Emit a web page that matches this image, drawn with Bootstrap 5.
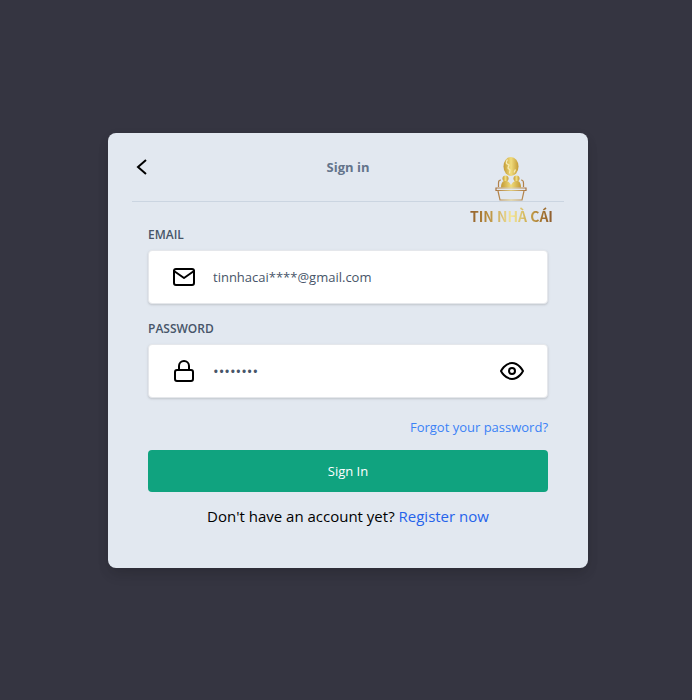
<!DOCTYPE html>
<html lang="en">
<head>
<meta charset="utf-8">
<meta name="viewport" content="width=device-width, initial-scale=1">
<title>Sign in</title>
<link href="https://cdn.jsdelivr.net/npm/bootstrap@5.3.0/dist/css/bootstrap.min.css" rel="stylesheet">
<style>
body { background: #353541; font-family: "Open Sans", "Noto Sans", sans-serif; color: #000; }
.signin-card { max-width: 480px; background: #e2e8f0; border-radius: 8px; box-shadow: 0 8px 15px -3px rgba(0,0,0,.1), 0 4px 12px rgba(0,0,0,.08); padding: 0 24px 40px; }
.signin-head { height: 69px; border-bottom: 1px solid #cbd5e1; }
.signin-title { font-size: 13px; font-weight: 700; color: #64748b; line-height: 20px; }
.back-btn { width: 20px; height: 24px; }
.brand { top: 23px; right: 35px; }
.brand-name { font: bold 14px/24px "Noto Sans CJK SC", sans-serif; white-space: nowrap; color: transparent; background: linear-gradient(90deg, #93602c, #b88d3d 22%, #f3e79c 50%, #d0b257 68%, #a8772f 85%, #8c5c30); -webkit-background-clip: text; background-clip: text; }
.signin-form { padding: 25px 16px 0; }
.field-label { font-size: 12px; font-weight: 600; color: #475569; line-height: 16px; margin-bottom: 7px; }
.field-box { height: 54px; background: #fff; border: 1px solid #e5e7eb; border-radius: 4px; box-shadow: 0 1px 3px rgba(0,0,0,.1), 0 1px 2px rgba(0,0,0,.06); padding: 0 23px; }
.field-box.first { margin-bottom: 17px; }
.field-input, .field-input:focus { background: transparent; color: #475569; font-size: 13px; line-height: 20px; border: 0; box-shadow: none; padding: 0 0 0 17px; }
.field-input[type="password"] { font-size: 15px; }
.line-icon { fill: none; stroke: #000; stroke-width: 2; stroke-linecap: round; stroke-linejoin: round; display: block; flex: none; }
.forgot-row { font-size: 13px; line-height: 20px; margin: 19px 0 13px; }
.forgot-row a { color: #3b82f6; }
.signin-btn, .signin-btn:hover { background: #10a37f; color: #fff; font-size: 13px; line-height: 20px; border: 0; border-radius: 4px; padding: 11px; }
.register { font-size: 15px; line-height: 24px; }
.register a { color: #2563eb; }
</style>
</head>
<body>
<main class="min-vh-100 d-flex align-items-center justify-content-center ps-1">
  <section class="signin-card position-relative w-100">
    <header class="signin-head d-flex align-items-center justify-content-between">
      <button type="button" class="back-btn btn p-0 border-0" aria-label="Back">
        <svg class="line-icon" width="20" height="24" viewBox="0 0 20 24"><path d="M14 5 6 12l8 7" style="stroke-linejoin:miter;stroke-linecap:butt"/></svg>
      </button>
      <h1 class="signin-title m-0">Sign in</h1>
      <span class="back-btn"></span>
    </header>
    <div class="brand position-absolute d-flex flex-column align-items-center">
      <svg width="32" height="48" viewBox="0 0 32 48" aria-hidden="true">
        <defs>
          <linearGradient id="gold" x1="0" x2="1"><stop offset="0" stop-color="#c39a35"/><stop offset=".5" stop-color="#f0dc7c"/><stop offset="1" stop-color="#c39a35"/></linearGradient>
          <linearGradient id="bronze" gradientUnits="userSpaceOnUse" x1="0" x2="32" y1="0" y2="0"><stop offset="0" stop-color="#a56d3c"/><stop offset=".5" stop-color="#dfca7b"/><stop offset="1" stop-color="#a56d3c"/></linearGradient>
        </defs>
        <ellipse cx="16" cy="10.500" rx="7.500" ry="9.500" fill="url(#gold)"/>
        <path d="M12.500 3.500q-1.500 2-1 4l2.500 1.500-1 3 2 2-.5 3.500M20.500 13.500l-1.500 3" fill="none" stroke="#f6ebb4" stroke-width="1.300"/>
        <circle cx="10.500" cy="22.500" r="3" fill="url(#gold)"/>
        <circle cx="21.500" cy="22.500" r="3" fill="url(#gold)"/>
        <path d="M6 31.500q0-5.500 3-6.500h3q2.500 1 4 4 1.500-3 4-4h3q3 1 3 6.500Z" fill="url(#gold)"/>
        <path d="M6 24q-2.500 0-2.500 3v4M26 24q2.500 0 2.500 3v4M1 32h30v2.500H1ZM3 35l2 9h22l2-9" fill="none" stroke="url(#bronze)" stroke-width="1.200"/>
      </svg>
      <span class="brand-name">TIN NHÀ CÁI</span>
    </div>
    <form class="signin-form" onsubmit="return false">
      <label class="field-label d-block" for="email">EMAIL</label>
      <div class="field-box first d-flex align-items-center">
        <svg class="line-icon" width="24" height="24" viewBox="0 0 24 24"><rect x="2" y="4" width="20" height="16" rx="2"/><path d="m2 6 10 7 10-7"/></svg>
        <input class="field-input form-control" type="email" id="email" value="tinnhacai****@gmail.com">
      </div>
      <label class="field-label d-block" for="password">PASSWORD</label>
      <div class="field-box d-flex align-items-center">
        <svg class="line-icon" width="24" height="24" viewBox="0 0 24 24"><rect x="3" y="11" width="18" height="11" rx="2"/><path d="M7 11V7a5 5 0 0 1 10 0v4"/></svg>
        <input class="field-input form-control" type="password" id="password" value="password">
        <button type="button" class="btn p-0 border-0" aria-label="Show password">
          <svg class="line-icon" width="24" height="24" viewBox="0 0 24 24"><path d="M1 12s4-8 11-8 11 8 11 8-4 8-11 8-11-8-11-8Z"/><circle cx="12" cy="12" r="3"/></svg>
        </button>
      </div>
      <div class="forgot-row text-end"><a class="text-decoration-none" href="#">Forgot your password?</a></div>
      <button type="submit" class="signin-btn btn w-100">Sign In</button>
      <p class="register text-center mb-0 mt-2 pt-1">Don't have an account yet? <a class="text-decoration-none" href="#">Register now</a></p>
    </form>
  </section>
</main>
<script src="https://cdn.jsdelivr.net/npm/bootstrap@5.3.0/dist/js/bootstrap.bundle.min.js"></script>
</body>
</html>
